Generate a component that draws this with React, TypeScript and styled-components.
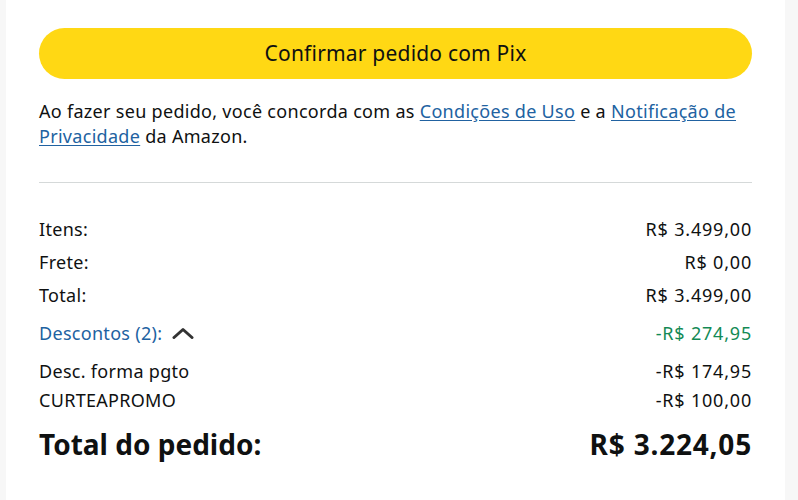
import React from 'react';
import styled, { createGlobalStyle } from 'styled-components';

const GlobalStyle = createGlobalStyle`
  html, body {
    margin: 0;
    padding: 0;
    background: #f7f7f7;
    font-family: 'Noto Sans', 'Liberation Sans', sans-serif;
    color: #0f1111;
  }
`;

const Page = styled.div`
  display: flex;
  min-height: 500px;
  padding: 0 13px 0 6px;
`;

const Panel = styled.div`
  flex: 1;
  background: #fff;
  padding: 28px 33px 0 33px;
`;

const PlaceButton = styled.button`
  display: block;
  width: 100%;
  height: 51px;
  border: none;
  border-radius: 26px;
  background: #ffd814;
  color: #0f1111;
  font-family: inherit;
  font-size: 21px;
  letter-spacing: 0.2px;
  padding: 0 0 2px;
  cursor: pointer;
`;

const Terms = styled.p`
  margin: 20px 0 0;
  font-size: 18px;
  letter-spacing: 0.3px;
  line-height: 25px;
`;

const Link = styled.a`
  color: #2162a1;
  text-decoration: underline;
  text-underline-offset: 2px;
  cursor: pointer;
`;

const Divider = styled.hr`
  margin: 33px 0 0;
  border: none;
  border-top: 1px solid #d5d9d9;
`;

const Summary = styled.div`
  padding-top: 30px;
  display: flex;
  flex-direction: column;
`;

const Row = styled.div<{ $h: number }>`
  display: flex;
  justify-content: space-between;
  align-items: center;
  height: ${(p) => p.$h}px;
  font-size: 18px;
  line-height: 22px;
  letter-spacing: 0.3px;
`;

const Label = styled.span<{ $link?: boolean }>`
  display: flex;
  align-items: center;
  gap: 10px;
  color: ${(p) => (p.$link ? '#2162a1' : 'inherit')};
`;

const Amount = styled.span<{ $green?: boolean }>`
  letter-spacing: 0.8px;
  color: ${(p) => (p.$green ? '#138a55' : 'inherit')};
`;

const GrandRow = styled.div`
  display: flex;
  justify-content: space-between;
  align-items: center;
  height: 46px;
  margin-top: 9px;
  font-size: 28px;
  font-weight: 700;
`;

const GrandAmount = styled.span`
  letter-spacing: 0.8px;
`;

const Chevron = () => (
  <svg width="22" height="12" viewBox="0 0 22 12" fill="none">
    <path d="M2 10.5 L11 2.5 L20 10.5" stroke="#333" strokeWidth="3" strokeLinecap="round" strokeLinejoin="round" />
  </svg>
);

const lines = [
  { label: 'Itens:', value: 'R$ 3.499,00', h: 32 },
  { label: 'Frete:', value: 'R$ 0,00', h: 33 },
  { label: 'Total:', value: 'R$ 3.499,00', h: 33 },
];

const discounts = [
  { label: 'Desc. forma pgto', value: '-R$ 174,95', h: 33 },
  { label: 'CURTEAPROMO', value: '-R$ 100,00', h: 25 },
];

export default function App() {
  return (
    <>
      <GlobalStyle />
      <Page>
        <Panel>
          <PlaceButton>Confirmar pedido com Pix</PlaceButton>
          <Terms>
            Ao fazer seu pedido, você concorda com as <Link>Condições de Uso</Link> e a{' '}
            <Link>Notificação de Privacidade</Link> da Amazon.
          </Terms>
          <Divider />
          <Summary>
            {lines.map((l) => (
              <Row key={l.label} $h={l.h}>
                <Label>{l.label}</Label>
                <Amount>{l.value}</Amount>
              </Row>
            ))}
            <Row $h={43}>
              <Label $link>
                Descontos (2): <Chevron />
              </Label>
              <Amount $green>-R$ 274,95</Amount>
            </Row>
            {discounts.map((l) => (
              <Row key={l.label} $h={l.h}>
                <Label>{l.label}</Label>
                <Amount>{l.value}</Amount>
              </Row>
            ))}
            <GrandRow>
              <span>Total do pedido:</span>
              <GrandAmount>R$ 3.224,05</GrandAmount>
            </GrandRow>
          </Summary>
        </Panel>
      </Page>
    </>
  );
}
